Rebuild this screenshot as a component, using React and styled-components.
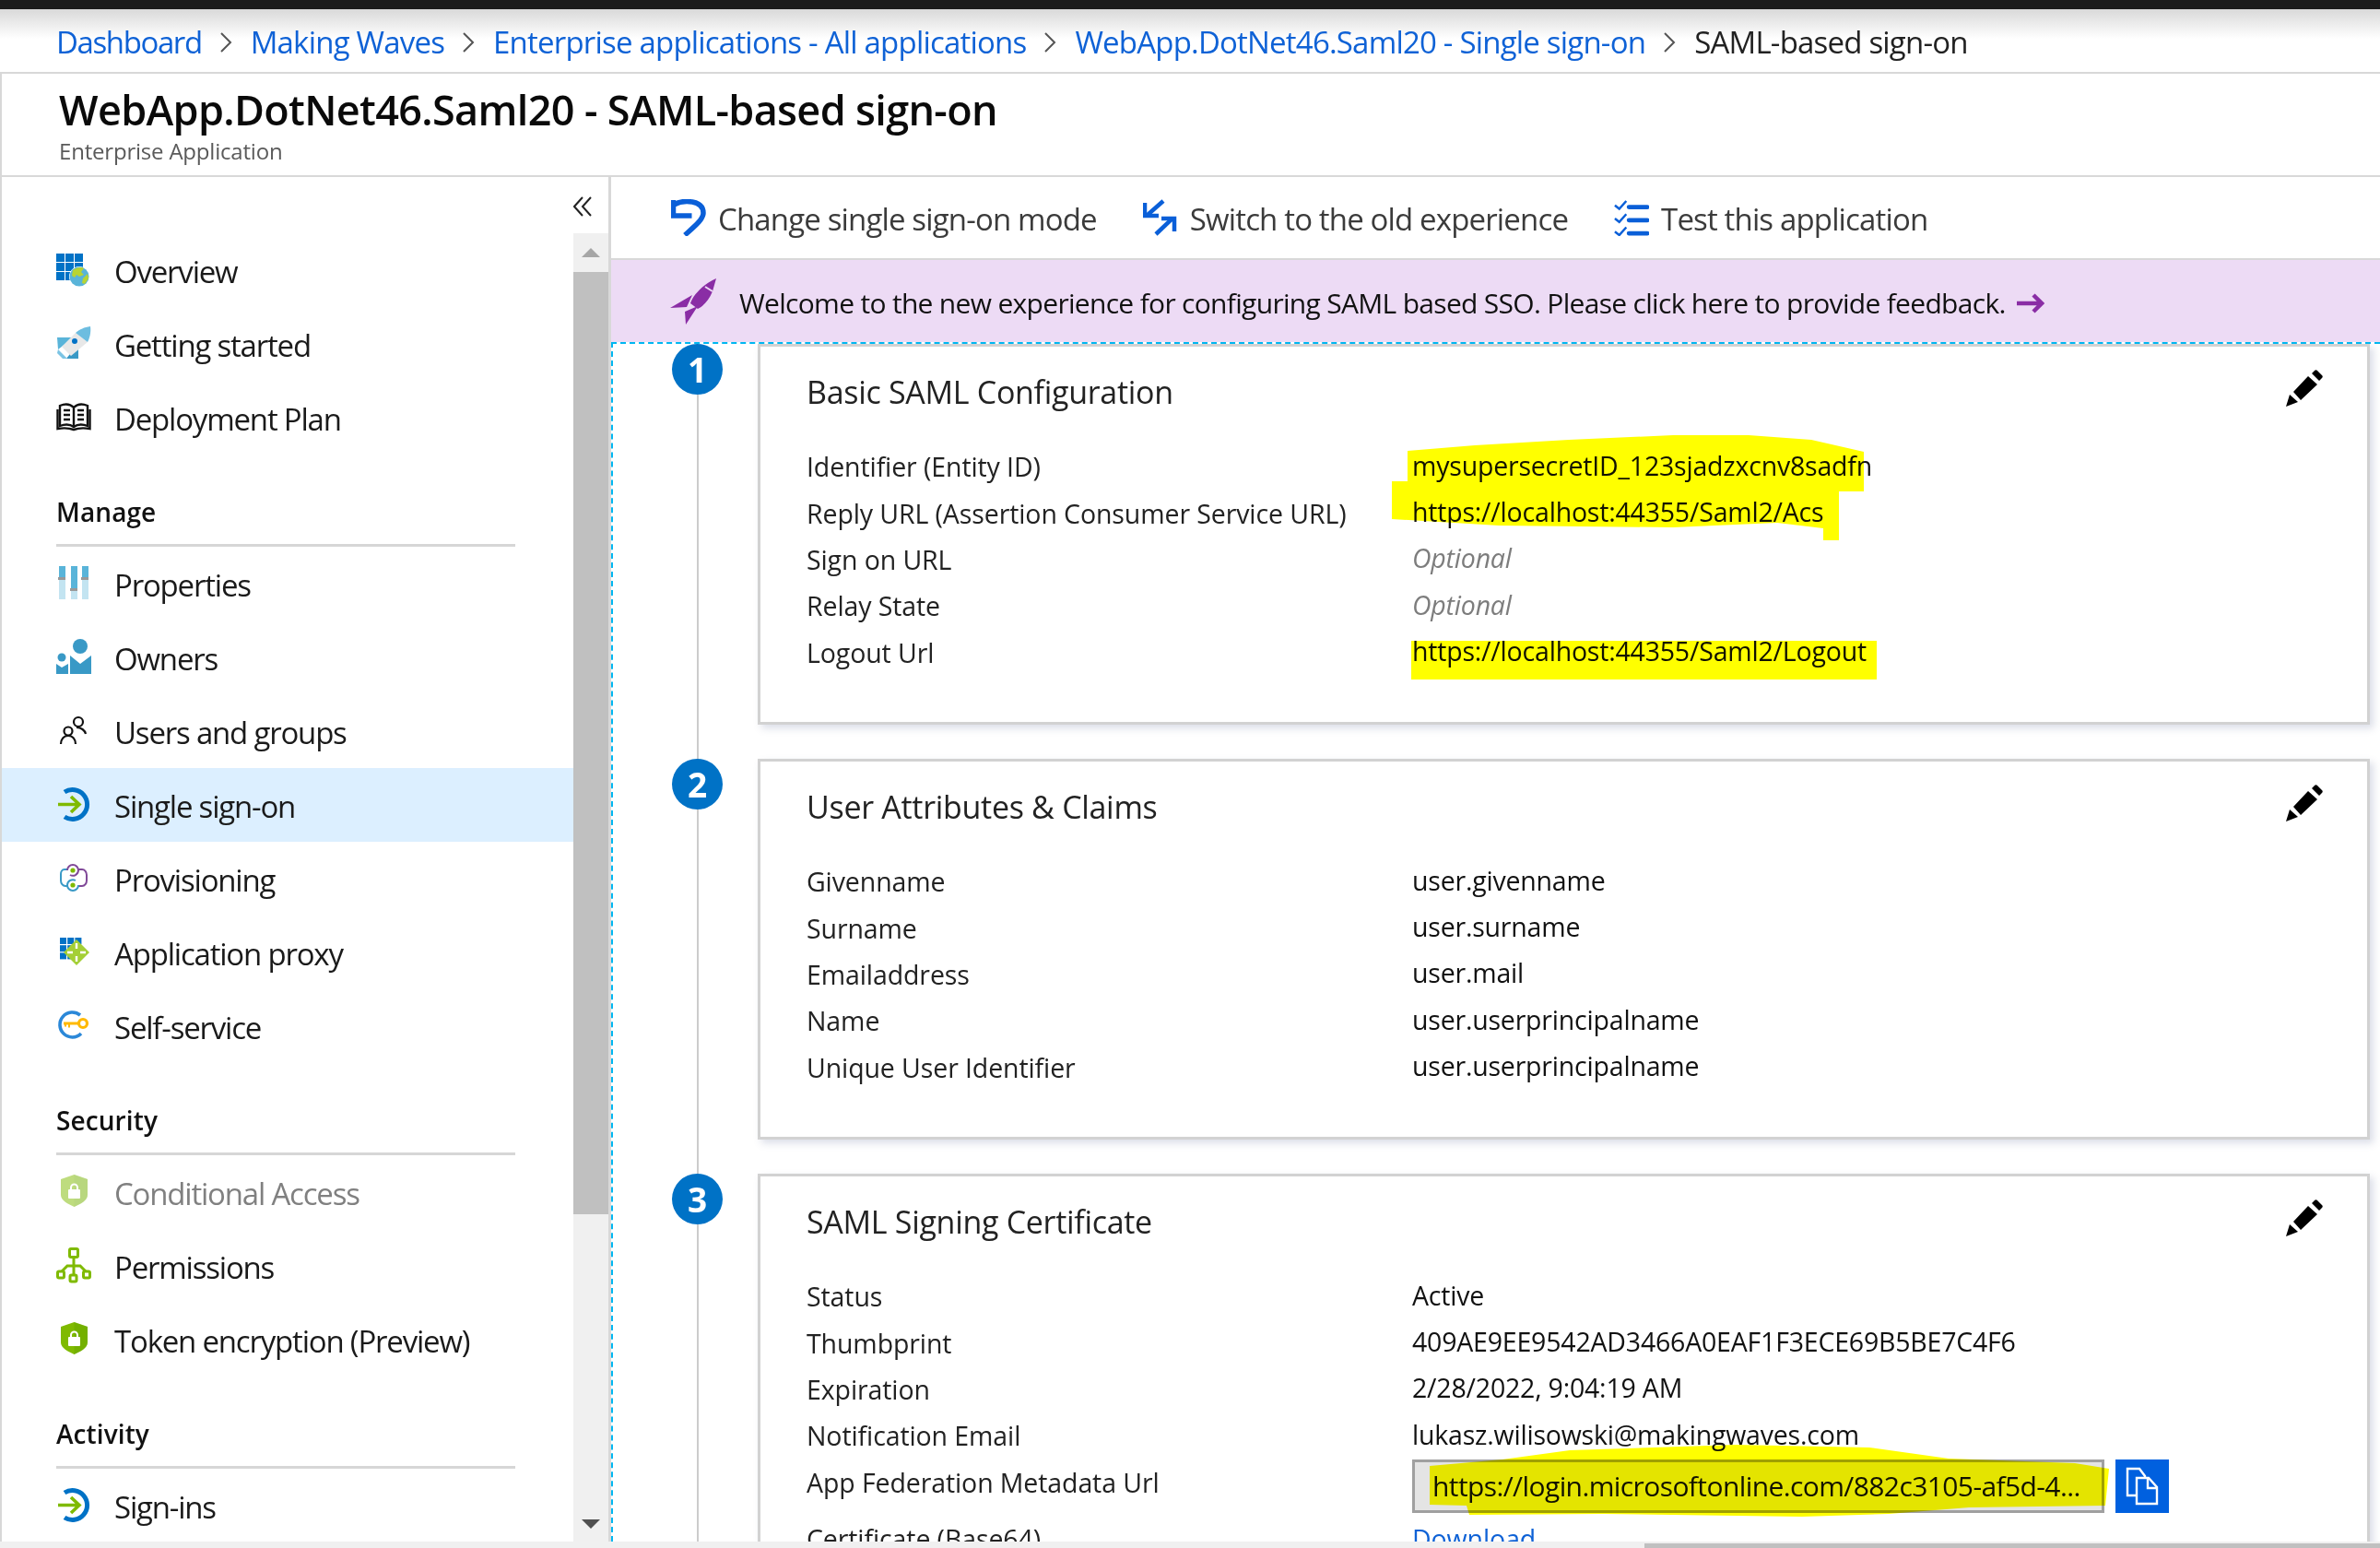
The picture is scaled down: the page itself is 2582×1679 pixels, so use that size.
import React from 'react';
import styled, { createGlobalStyle } from 'styled-components';

const GlobalStyle = createGlobalStyle`
  html, body { margin: 0; padding: 0; background: #fff; }
  body { font-family: "Open Sans", "Liberation Sans", sans-serif; color: #111; }
  * { box-sizing: border-box; }
`;

const Page = styled.div`
  width: 2582px;
  height: 1679px;
  display: flex;
  flex-direction: column;
  overflow: hidden;
`;

const TopBar = styled.div`
  height: 10px;
  flex: none;
  background: #1b1b1b;
`;

const Breadcrumbs = styled.nav`
  height: 70px;
  flex: none;
  display: flex;
  align-items: center;
  padding: 2px 0 0 61px;
  background: linear-gradient(#d9d9d9 0, #ffffff 32px);
  border-bottom: 2px solid #d8d8d8;
  font-size: 33px;
  letter-spacing: -0.8px;
`;

const Crumb = styled.a`
  color: #0f62d6;
  letter-spacing: ${(p) => (p.$tight ? '-1.4px' : 'inherit')};
`;

const CrumbCurrent = styled.span`
  color: #222;
`;

const CrumbSep = styled.svg`
  width: 14px;
  height: 24px;
  margin: 2px 20px 0 19px;
  fill: none;
  stroke: #555;
  stroke-width: 2;
`;

const TitleBlock = styled.header`
  height: 112px;
  flex: none;
  padding: 11px 0 0 62px;
  border-left: 2px solid #d8d8d8;
  border-bottom: 2px solid #d8d8d8;
`;

const Title = styled.h1`
  margin: 0;
  font-size: 45px;
  line-height: 56px;
  font-weight: 600;
  letter-spacing: -0.66px;
  color: #0a0a0a;
`;

const Subtitle = styled.div`
  font-size: 24px;
  line-height: 34px;
  color: #5a5a5a;
  letter-spacing: -0.2px;
`;

const Body = styled.div`
  flex: 1;
  min-height: 0;
  display: flex;
`;

const Sidebar = styled.aside`
  width: 663px;
  flex: none;
  display: flex;
  flex-direction: column;
  border-left: 2px solid #d8d8d8;
  border-right: 3px solid #d8d8d8;
`;

const CollapseRow = styled.div`
  height: 61px;
  flex: none;
  display: flex;
  justify-content: flex-end;
  align-items: center;
  padding: 3px 18px 0 0;
`;

const SideBody = styled.div`
  flex: 1;
  min-height: 0;
  display: flex;
`;

const NavList = styled.div`
  flex: 1;
  min-width: 0;
`;

const NavRow = styled.a`
  height: 80px;
  display: flex;
  align-items: center;
  gap: 23px;
  padding-left: 59px;
  font-size: 33px;
  letter-spacing: -1.2px;
  color: ${(p) => (p.$disabled ? '#808080' : '#1a1a1a')};
  background: ${(p) => (p.$active ? '#dcefff' : 'transparent')};
`;

const NavLabel = styled.span`
  padding-top: 2px;
`;

const NavIcon = styled.svg`
  width: 40px;
  height: 40px;
  flex: none;
  opacity: ${(p) => (p.$disabled ? 0.5 : 1)};
`;

const Section = styled.div`
  height: 100px;
  margin-left: 59px;
  width: 498px;
  padding-top: 42px;
  border-bottom: 3px solid #d6d6d6;
  font-size: 28px;
  line-height: 40px;
  font-weight: 600;
  letter-spacing: 0.1px;
  color: #111;
`;

const VScroll = styled.div`
  width: 38px;
  flex: none;
  display: flex;
  flex-direction: column;
  background: #f0f0f0;
`;

const ScrollArrow = styled.div`
  height: 42px;
  flex: none;
  display: flex;
  align-items: center;
  justify-content: center;
`;

const ScrollThumb = styled.div`
  height: 1022px;
  flex: none;
  background: #c0c0c0;
`;

const ScrollFill = styled.div`
  flex: 1;
  display: flex;
  align-items: flex-end;
  justify-content: center;
  padding-bottom: 14px;
`;

const Main = styled.main`
  flex: 1;
  min-width: 0;
  display: flex;
  flex-direction: column;
`;

const Toolbar = styled.div`
  height: 90px;
  flex: none;
  display: flex;
  align-items: center;
  gap: 50px;
  border-bottom: 2px solid #d8d8d8;
  padding-left: 65px;
  font-size: 33px;
  letter-spacing: -0.85px;
  color: #3b3b3b;
`;

const ToolItem = styled.div`
  display: flex;
  align-items: center;
  gap: 13px;
`;

const ToolLabel = styled.span`
  padding-top: 2px;
`;

const ToolIcon = styled.svg`
  height: 40px;
  width: 38px;
  flex: none;
  color: #0a5fd8;
`;

const Banner = styled.div`
  height: 89px;
  flex: none;
  display: flex;
  align-items: center;
  gap: 25px;
  padding-left: 64px;
  background: #eddbf5;
  font-size: 30px;
  letter-spacing: -0.69px;
  color: #111;
`;

const BannerText = styled.span`
  display: flex;
  align-items: center;
  gap: 12px;
  padding-top: 4px;
`;

const Steps = styled.div`
  flex: 1;
  min-height: 0;
  overflow: hidden;
  padding-right: 11px;
  border-top: 2px dashed #00b7f1;
  border-left: 2px dashed #00b7f1;
`;

const Step = styled.section`
  height: 450px;
  display: flex;
`;

const Marker = styled.div`
  width: 157px;
  flex: none;
  padding-left: 64px;
  display: flex;
  flex-direction: column;
`;

const Bubble = styled.div`
  width: 55px;
  height: 55px;
  flex: none;
  border-radius: 50%;
  background: #0072c6;
  color: #fff;
  display: flex;
  align-items: center;
  justify-content: center;
  font-size: 37px;
  font-weight: 700;
`;

const Rail = styled.div`
  flex: 1;
  width: 2px;
  margin-left: 27px;
  background: #cccccc;
`;

const Card = styled.div`
  position: relative;
  width: 1749px;
  height: 413px;
  border: 3px solid #d2d2d2;
  padding: 0 0 0 50px;
  background: #fff;
  box-shadow: 4px 4px 8px rgba(90, 105, 150, 0.22);
`;

const CardHead = styled.div`
  height: 105px;
  display: flex;
  align-items: center;
  justify-content: space-between;
  padding: 0 47px 7px 0;
  font-size: 34px;
  letter-spacing: -0.3px;
  color: #222;
`;

const Row = styled.div`
  height: ${(p) => (p.$tall ? '72px' : '50.4px')};
  display: grid;
  grid-template-columns: 657px 1fr;
  align-items: center;
  font-size: 28.5px;
  letter-spacing: -0.1px;
  color: #222;
`;

const Label = styled.span`
  margin-top: ${(p) => (p.$raised ? '-8px' : '0')};
`;

const Value = styled.span`
  color: ${(p) => (p.$muted ? '#7d7d7d' : '#111')};
  font-style: ${(p) => (p.$muted ? 'italic' : 'normal')};
  letter-spacing: -0.2px;
  margin-top: -3px;
`;

const Pencil = styled.svg`
  width: 41px;
  height: 41px;
  margin-bottom: 10px;
  fill: #000;
`;

const MarkerInk = styled.svg`
  position: absolute;
  top: -3px;
  left: -3px;
  width: 1749px;
  height: 413px;
  mix-blend-mode: multiply;
  pointer-events: none;
  fill: #ffff00;
`;

const UrlRow = styled.div`
  display: flex;
  align-items: center;
  gap: 12px;
`;

const UrlBox = styled.div`
  width: 751px;
  height: 58px;
  display: flex;
  align-items: center;
  padding-left: 19px;
  background: #e4e4e4;
  border: 3px solid #a0a0a0;
  color: #111;
  font-size: 30px;
  letter-spacing: -0.6px;
`;

const CopyButton = styled.div`
  width: 58px;
  height: 58px;
  background: #0060df;
  display: flex;
  align-items: center;
  justify-content: center;
`;

const DownloadLink = styled.a`
  color: #0f62d6;
  text-decoration: underline;
`;

const HScroll = styled.div`
  height: 7px;
  flex: none;
  background: #f0f0f0;
  padding: 2px 0 0 1784px;
`;

const HThumb = styled.div`
  height: 5px;
  background: #c0c0c0;
`;

const Sep = () => (
  <CrumbSep viewBox="0 0 14 24">
    <path d="M2 2l10 10L2 22" />
  </CrumbSep>
);

const GridSquares = ({ x = 1, y = 0, n = 3, s = 9, g = 1.5 }) => {
  const cells = [];
  for (let r = 0; r < n; r++) {
    for (let c = 0; c < n; c++) {
      cells.push(<rect key={`${r}-${c}`} x={x + c * (s + g)} y={y + r * (s + g)} width={s} height={s} fill="#0072c6" />);
    }
  }
  return <>{cells}</>;
};

const SignInGlyph = () => (
  <>
    <path d="M9 6a16 16 0 1 1 0 27" fill="none" stroke="#0072c6" strokeWidth="5" />
    <path d="M2 19.5h22M16 11l9 8.5-9 8.5" fill="none" stroke="#7fba00" strokeWidth="3.6" />
  </>
);

const ShieldGlyph = () => (
  <>
    <path d="M19.5 1L34 6v17c0 6-8 10-14.5 13C13 33 5 29 5 23V6z" fill="#7fba00" />
    <path d="M19.5 1L34 6v17c0 6-8 10-14.5 13z" fill="#5e9e00" opacity=".35" />
    <rect x="13" y="17" width="13" height="10" rx="1" fill="#fff" />
    <path d="M16 17v-2a3.5 3.5 0 0 1 7 0v2" fill="none" stroke="#fff" strokeWidth="2" />
  </>
);

const navIcons = {
  overview: (
    <>
      <GridSquares x={0} y={2} s={9} g={1} />
      <circle cx="25" cy="27" r="11" fill="#fff" />
      <circle cx="25" cy="27" r="10.5" fill="#59b4d9" />
      <path d="M18 20c4-3 9-4 12-2l-3 4 3 3-5 2-3-2-2 3-3-2zM34 24l1 5-4 6-3-1 1-5z" fill="#b8d432" />
    </>
  ),
  rocket: (
    <>
      <path d="M1 13H19L2 26z" fill="#59b4d9" />
      <path d="M24 19V36H11z" fill="#3999c6" />
      <path d="M2 26l10 10H7L1 30z" fill="#7cc4e4" />
      <path d="M21 8L34 18 16 33 6 23z" fill="#e8e8e8" />
      <path d="M37 1C30 2 26 4 21 8L34 18C36 14 38 8 37 1z" fill="#6dbde0" />
      <circle cx="20" cy="17" r="3" fill="#0072c6" />
    </>
  ),
  book: (
    <g fill="none" stroke="#111" strokeWidth="2.4">
      <path d="M19 9C15 5 9 5 4 7v22c5-2 11-2 15 1 4-3 10-3 15-1V7c-5-2-11-2-15 2zM19 9v21" />
      <path d="M1.5 11v21c6-1 12-1 17.500 1 5.500-2 11.500-2 17.500-1V11M8 12h7M8 17h7M8 22h7M23 12h7M23 17h7M23 22h7" />
    </g>
  ),
  properties: (
    <>
      <rect x="3" y="1" width="7" height="36" fill="#c3e4f1" />
      <rect x="16" y="1" width="7" height="36" fill="#c3e4f1" />
      <rect x="28" y="1" width="7" height="36" fill="#c3e4f1" />
      <rect x="3" y="1" width="7" height="14" fill="#59b4d9" />
      <rect x="16" y="1" width="7" height="25" fill="#59b4d9" />
      <rect x="28" y="1" width="7" height="14" fill="#59b4d9" />
      <rect x="2" y="13" width="8" height="3" fill="#999" />
      <rect x="15" y="25" width="8" height="3" fill="#999" />
      <rect x="27" y="13" width="8" height="3" fill="#999" />
    </>
  ),
  owners: (
    <g fill="#3999c6">
      <circle cx="26" cy="8" r="8" />
      <circle cx="6" cy="20" r="4.500" />
      <path d="M15 18l11 9 12-9v20H15zM0 27l6 4 7-4v11H0z" />
    </g>
  ),
  users: (
    <g fill="none" stroke="#111" strokeWidth="2.2">
      <circle cx="24" cy="10" r="5" />
      <circle cx="13" cy="20" r="4.500" />
      <path d="M5 34c0-5 3-9 8-9s8 4 8 9M22 16c5 0 9 3 10 7" />
    </g>
  ),
  provisioning: (
    <g fill="none" strokeWidth="2">
      <path d="M12 10H9c-3 0-4 3-4 5v7c0 3 2 6 5 6h2" stroke="#3999c6" />
      <path d="M24 10h4c3 0 5 3 5 6v6c0 3-2 6-5 6h-4" stroke="#804998" />
      <path d="M12 11a6 6 0 1 1 12 0" stroke="#804998" />
      <path d="M12 27a6 6 0 0 0 12 0" stroke="#3999c6" />
      <path d="M12 27a6 6 0 0 1 9-5" stroke="#3999c6" />
      <path d="M24 11a6 6 0 0 1-9 5" stroke="#804998" />
      <circle cx="18" cy="11" r="2.600" fill="#7fba00" stroke="none" />
      <circle cx="18" cy="27" r="2.600" fill="#7fba00" stroke="none" />
    </g>
  ),
  proxy: (
    <>
      <GridSquares x={4} y={4} s={7} g={1.2} />
      <path d="M22 6l14 14-14 14L8 20z" fill="#a4cf36" />
      <path d="M22 10v6M22 24v6M12 20h6M26 20h6" stroke="#fff" strokeWidth="2.400" />
    </>
  ),
  selfService: (
    <>
      <path d="M26 8A13.500 13.500 0 1 0 27 28" fill="none" stroke="#2b88d8" strokeWidth="3.600" />
      <circle cx="29" cy="17" r="4.500" fill="none" stroke="#ffb900" strokeWidth="3.200" />
      <path d="M8 15.500h16v3H15v3h-2v-3h-2v2H9v-2H8z" fill="#ffb900" />
    </>
  ),
  shield: <ShieldGlyph />,
  tree: (
    <g fill="none" stroke="#7fba00" strokeWidth="3">
      <rect x="14.500" y="1.500" width="9" height="9" rx="1.500" />
      <rect x="1.500" y="26" width="7" height="7" rx="1.500" />
      <rect x="15" y="30" width="7" height="7" rx="1.500" />
      <rect x="29.500" y="26" width="7" height="7" rx="1.500" />
      <path d="M19 10v20M6 26l6-6h14l6 6" />
    </g>
  ),
  signin: <SignInGlyph />,
};

const NavItem = ({ icon, label, active, disabled }) => (
  <NavRow $active={active} $disabled={disabled}>
    <NavIcon viewBox="0 0 40 40" $disabled={disabled}>{navIcons[icon]}</NavIcon>
    <NavLabel>{label}</NavLabel>
  </NavRow>
);

const PencilIcon = () => (
  <Pencil viewBox="0 0 41 41">
    <path d="M0 41l4-13 9 8zM8 25L24 8l10 9-18 17zM28 5l3-3c1-1 2-1 3 0l5 5c1 1 1 2 0 3l-3 3z" />
  </Pencil>
);

const firstCardMarks = [
  'M1527 489L1600 483 1702 477 1815 472 1897 472 1965 477 2022 490V533H1995V586H1978V573L1928 567 1815 572 1626 570 1510 563V522L1527 522z',
  'M1531 695H2036V737H1531z',
];

const urlMark = 'M1551 1590L1630 1583 1703 1573 1883 1567 2028 1570 2114 1582 2251 1587 2288 1593 2284 1633 2136 1635 2049 1642 1955 1645 1739 1642 1594 1643 1591 1633 1551 1632z';

const App = () => (
  <Page>
    <GlobalStyle />
    <TopBar />
    <Breadcrumbs>
      <Crumb $tight>Dashboard</Crumb><Sep />
      <Crumb>Making Waves</Crumb><Sep />
      <Crumb>Enterprise applications - All applications</Crumb><Sep />
      <Crumb>WebApp.DotNet46.Saml20 - Single sign-on</Crumb><Sep />
      <CrumbCurrent>SAML-based sign-on</CrumbCurrent>
    </Breadcrumbs>
    <TitleBlock>
      <Title>WebApp.DotNet46.Saml20 - SAML-based sign-on</Title>
      <Subtitle>Enterprise Application</Subtitle>
    </TitleBlock>
    <Body>
      <Sidebar>
        <CollapseRow>
          <svg width="20" height="22" viewBox="0 0 20 22" fill="none" stroke="#222" strokeWidth="2">
            <path d="M10 1L1 11l9 10M19 1l-9 10 9 10" />
          </svg>
        </CollapseRow>
        <SideBody>
          <NavList>
            <NavItem icon="overview" label="Overview" />
            <NavItem icon="rocket" label="Getting started" />
            <NavItem icon="book" label="Deployment Plan" />
            <Section>Manage</Section>
            <NavItem icon="properties" label="Properties" />
            <NavItem icon="owners" label="Owners" />
            <NavItem icon="users" label="Users and groups" />
            <NavItem icon="signin" label="Single sign-on" active />
            <NavItem icon="provisioning" label="Provisioning" />
            <NavItem icon="proxy" label="Application proxy" />
            <NavItem icon="selfService" label="Self-service" />
            <Section>Security</Section>
            <NavItem icon="shield" label="Conditional Access" disabled />
            <NavItem icon="tree" label="Permissions" />
            <NavItem icon="shield" label="Token encryption (Preview)" />
            <Section>Activity</Section>
            <NavItem icon="signin" label="Sign-ins" />
          </NavList>
          <VScroll>
            <ScrollArrow>
              <svg width="20" height="10" viewBox="0 0 20 10"><path d="M10 0l10 10H0z" fill="#a6a6a6" /></svg>
            </ScrollArrow>
            <ScrollThumb />
            <ScrollFill>
              <svg width="20" height="10" viewBox="0 0 20 10"><path d="M0 0h20L10 10z" fill="#505050" /></svg>
            </ScrollFill>
          </VScroll>
        </SideBody>
      </Sidebar>
      <Main>
        <Toolbar>
          <ToolItem>
            <ToolIcon viewBox="0 0 38 40" fill="none" stroke="currentColor" strokeWidth="5.500">
              <path d="M3 6C14 0 35 1 35 15c0 7-10 15-20 24" />
              <path d="M2.500 1v17h20" />
            </ToolIcon>
            <ToolLabel>Change single sign-on mode</ToolLabel>
          </ToolItem>
          <ToolItem>
            <ToolIcon viewBox="0 0 38 40" fill="none" stroke="currentColor" strokeWidth="4.500">
              <path d="M22 2L5 17" />
              <path d="M2 4v14h15" />
              <path d="M14 38l18-17" />
              <path d="M20 21h14v14" />
            </ToolIcon>
            <ToolLabel>Switch to the old experience</ToolLabel>
          </ToolItem>
          <ToolItem>
            <ToolIcon viewBox="0 0 40 42" fill="none" stroke="currentColor">
              <path d="M1 7l5 4 8-9M1 22l5 4 8-9M1 37l5 4 8-9" strokeWidth="2.600" />
              <path d="M17 9h21M17 24h21M17 39h21" strokeWidth="5" strokeLinecap="round" />
            </ToolIcon>
            <ToolLabel>Test this application</ToolLabel>
          </ToolItem>
        </Toolbar>
        <Banner>
          <svg width="50" height="50" viewBox="0 0 50 50">
            <path d="M50 0L46 14C42 24 36 30 30 33L22 27C25 18 36 6 50 0zM24 18L0 32 18 31zM30 30L17 50 16 36z" fill="#8a2da5" />
            <path d="M38 9l8 5" stroke="#eddbf5" strokeWidth="2" />
          </svg>
          <BannerText>
            Welcome to the new experience for configuring SAML based SSO. Please click here to provide feedback.
            <svg width="30" height="22" viewBox="0 0 30 22" fill="none" stroke="#8a2da5" strokeWidth="4.500">
              <path d="M0 11h27M18 2l9 9-9 9" />
            </svg>
          </BannerText>
        </Banner>
        <Steps>
          <Step>
            <Marker><Bubble>1</Bubble><Rail /></Marker>
            <Card>
              <CardHead>Basic SAML Configuration<PencilIcon /></CardHead>
              <Row><Label>Identifier (Entity ID)</Label><Value>mysupersecretID_123sjadzxcnv8sadfn</Value></Row>
              <Row><Label>Reply URL (Assertion Consumer Service URL)</Label><Value>https://localhost:44355/Saml2/Acs</Value></Row>
              <Row><Label>Sign on URL</Label><Value $muted>Optional</Value></Row>
              <Row><Label>Relay State</Label><Value $muted>Optional</Value></Row>
              <Row><Label>Logout Url</Label><Value>https://localhost:44355/Saml2/Logout</Value></Row>
              <MarkerInk viewBox="822 373 1749 413">
                {firstCardMarks.map((d) => <path key={d} d={d} />)}
              </MarkerInk>
            </Card>
          </Step>
          <Step>
            <Marker><Bubble>2</Bubble><Rail /></Marker>
            <Card>
              <CardHead>User Attributes &amp; Claims<PencilIcon /></CardHead>
              <Row><Label>Givenname</Label><Value>user.givenname</Value></Row>
              <Row><Label>Surname</Label><Value>user.surname</Value></Row>
              <Row><Label>Emailaddress</Label><Value>user.mail</Value></Row>
              <Row><Label>Name</Label><Value>user.userprincipalname</Value></Row>
              <Row><Label>Unique User Identifier</Label><Value>user.userprincipalname</Value></Row>
            </Card>
          </Step>
          <Step>
            <Marker><Bubble>3</Bubble><Rail /></Marker>
            <Card>
              <CardHead>SAML Signing Certificate<PencilIcon /></CardHead>
              <Row><Label>Status</Label><Value>Active</Value></Row>
              <Row><Label>Thumbprint</Label><Value>409AE9EE9542AD3466A0EAF1F3ECE69B5BE7C4F6</Value></Row>
              <Row><Label>Expiration</Label><Value>2/28/2022, 9:04:19 AM</Value></Row>
              <Row><Label>Notification Email</Label><Value>lukasz.wilisowski@makingwaves.com</Value></Row>
              <Row>
                <Label $raised>App Federation Metadata Url</Label>
                <UrlRow>
                  <UrlBox>https://login.microsoftonline.com/882c3105-af5d-4...</UrlBox>
                  <CopyButton>
                    <svg width="36" height="42" viewBox="0 0 36 42" fill="none" stroke="#fff" strokeWidth="2.400">
                      <path d="M12 31H2V2h13l6 8v3" />
                      <path d="M12 12h13l9 10v18H12z" />
                      <path d="M24 12v11h10" />
                    </svg>
                  </CopyButton>
                </UrlRow>
              </Row>
              <Row $tall><Label>Certificate (Base64)</Label><DownloadLink>Download</DownloadLink></Row>
              <MarkerInk viewBox="822 1273 1749 413"><path d={urlMark} /></MarkerInk>
            </Card>
          </Step>
        </Steps>
      </Main>
    </Body>
    <HScroll><HThumb /></HScroll>
  </Page>
);

export default App;
